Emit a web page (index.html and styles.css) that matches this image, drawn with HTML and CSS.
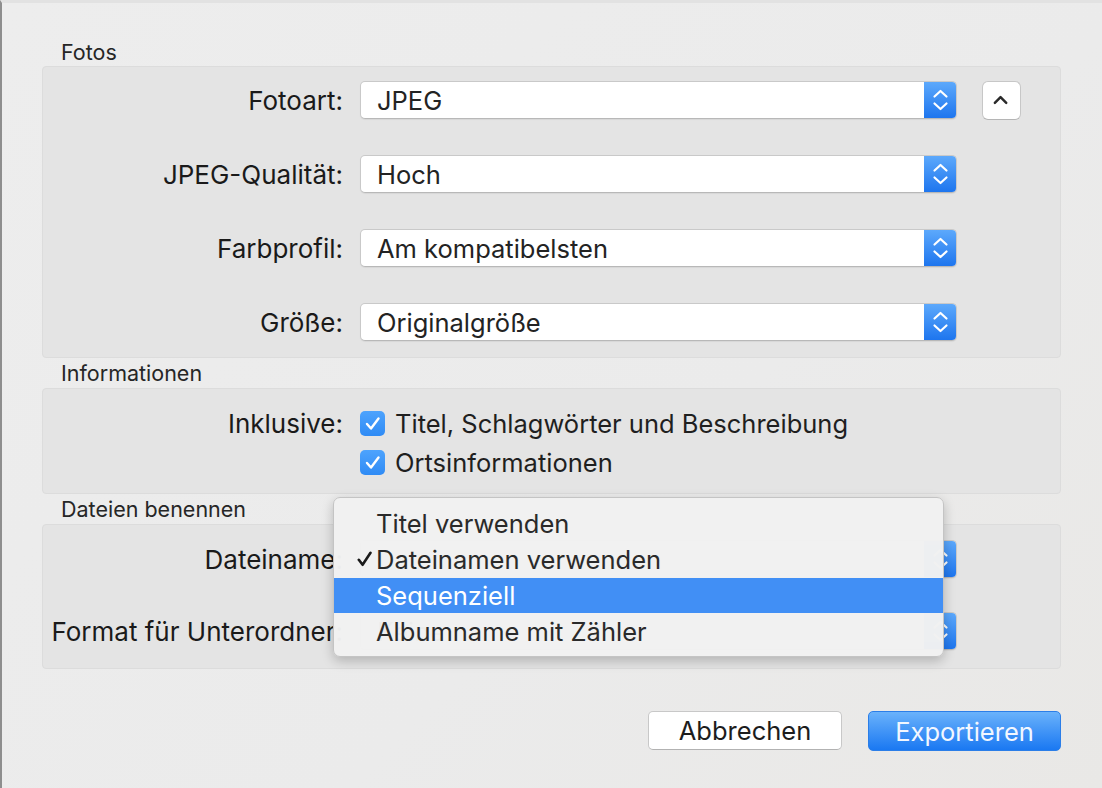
FILE: index.html
```html
<!DOCTYPE html>
<html lang="de">
<head>
<meta charset="utf-8">
<title>Exportieren</title>
<link rel="stylesheet" href="styles.css">
</head>
<body>
<div class="window">
  <div class="section-title first">Fotos</div>
  <div class="box box-fotos">
    <div class="row">
      <div class="label">Fotoart:</div>
      <div class="popup"><span class="value">JPEG</span><span class="stepper"><svg viewBox="0 0 33 38" width="33" height="38"><path d="M10.5 15.5 L16.5 10 L22.5 15.5" /><path d="M10.5 22.5 L16.5 28 L22.5 22.5" /></svg></span></div>
      <div class="disclose"><svg viewBox="0 0 39 39" width="37" height="37"><path d="M12.5 22 L18.5 16 L24.5 22" /></svg></div>
    </div>
    <div class="row">
      <div class="label">JPEG-Qualität:</div>
      <div class="popup"><span class="value">Hoch</span><span class="stepper"><svg viewBox="0 0 33 38" width="33" height="38"><path d="M10.5 15.5 L16.5 10 L22.5 15.5" /><path d="M10.5 22.5 L16.5 28 L22.5 22.5" /></svg></span></div>
    </div>
    <div class="row">
      <div class="label">Farbprofil:</div>
      <div class="popup"><span class="value">Am kompatibelsten</span><span class="stepper"><svg viewBox="0 0 33 38" width="33" height="38"><path d="M10.5 15.5 L16.5 10 L22.5 15.5" /><path d="M10.5 22.5 L16.5 28 L22.5 22.5" /></svg></span></div>
    </div>
    <div class="row">
      <div class="label">Größe:</div>
      <div class="popup"><span class="value">Originalgröße</span><span class="stepper"><svg viewBox="0 0 33 38" width="33" height="38"><path d="M10.5 15.5 L16.5 10 L22.5 15.5" /><path d="M10.5 22.5 L16.5 28 L22.5 22.5" /></svg></span></div>
    </div>
  </div>

  <div class="section-title">Informationen</div>
  <div class="box box-info">
    <div class="check-row">
      <div class="label">Inklusive:</div>
      <div class="check"><span class="checkbox"><svg viewBox="0 0 25 25" width="25" height="25"><path d="M7 13 L11 17.5 L18.5 7.5" /></svg></span><span>Titel, Schlagwörter und Beschreibung</span></div>
    </div>
    <div class="check-row">
      <div class="label"></div>
      <div class="check"><span class="checkbox"><svg viewBox="0 0 25 25" width="25" height="25"><path d="M7 13 L11 17.5 L18.5 7.5" /></svg></span><span>Ortsinformationen</span></div>
    </div>
  </div>

  <div class="section-title">Dateien benennen</div>
  <div class="box box-files">
    <div class="row">
      <div class="label">Dateiname:</div>
      <div class="popup"><span class="value">Dateinamen verwenden</span><span class="stepper"><svg viewBox="0 0 33 38" width="33" height="38"><path d="M10.5 15.5 L16.5 10 L22.5 15.5" /><path d="M10.5 22.5 L16.5 28 L22.5 22.5" /></svg></span></div>
    </div>
    <div class="row">
      <div class="label">Format für Unterordner:</div>
      <div class="popup"><span class="value">Keine</span><span class="stepper"><svg viewBox="0 0 33 38" width="33" height="38"><path d="M10.5 15.5 L16.5 10 L22.5 15.5" /><path d="M10.5 22.5 L16.5 28 L22.5 22.5" /></svg></span></div>
    </div>
  </div>

  <div class="buttons">
    <div class="btn btn-cancel">Abbrechen</div>
    <div class="btn btn-default">Exportieren</div>
  </div>

  <div class="menu">
    <div class="menu-item"><span class="mark"></span>Titel verwenden</div>
    <div class="menu-item"><span class="mark"><svg viewBox="0 0 16 16" width="16" height="16"><path d="M1.8 8.8 L5.6 13.8 L13.5 1.8" /></svg></span>Dateinamen verwenden</div>
    <div class="menu-item selected"><span class="mark"></span>Sequenziell</div>
    <div class="menu-item"><span class="mark"></span>Albumname mit Zähler</div>
  </div>
</div>
</body>
</html>
```

FILE: styles.css
```css
html, body {
  margin: 0;
  padding: 0;
}
body {
  width: 1102px;
  height: 788px;
  overflow: hidden;
  background: #ececec;
  font-family: Inter, "Noto Sans", sans-serif;
  color: #1f1f1f;
}
.window {
  position: relative;
  box-sizing: border-box;
  width: 1102px;
  height: 788px;
  padding: 36px 41px 0 42px;
  border-left: 2px solid #8e8e8e;
  border-top: 3px solid #e2e2e2;
  background: linear-gradient(135deg, #ededed 0%, #ebebeb 60%, #e9e8e6 100%);
}
.section-title {
  height: 30px;
  line-height: 30px;
  padding-left: 17px;
  font-size: 21.5px;
  color: #262626;
}
.section-title.first {
  height: 27px;
  line-height: 27px;
}
.box {
  box-sizing: border-box;
  width: 1019px;
  margin-left: -2px;
  background: #e4e4e4;
  border: 1px solid #dcdcdc;
  border-radius: 4px;
}
.box-fotos {
  padding: 14px 0 16px;
  display: flex;
  flex-direction: column;
  gap: 36px;
}
.box-info {
  padding: 17px 0 14px;
  display: flex;
  flex-direction: column;
  gap: 5px;
}
.box-files {
  padding: 15px 0 18px;
  display: flex;
  flex-direction: column;
  gap: 34px;
}
.row, .check-row {
  display: flex;
  align-items: center;
}
.row { height: 38px; }
.check-row { height: 34px; }
.label {
  box-sizing: border-box;
  width: 300px;
  flex: none;
  text-align: right;
  font-size: 26px;
  color: #1a1a1a;
  white-space: nowrap;
}
.popup {
  box-sizing: border-box;
  margin-left: 17px;
  width: 597px;
  height: 38px;
  display: flex;
  align-items: center;
  background: #ffffff;
  border: 1px solid #c9c9c9;
  border-bottom-color: #b8b8b8;
  border-radius: 5px;
  box-shadow: 0 1px 1px rgba(0,0,0,0.06);
  overflow: hidden;
}
.value {
  flex: 1;
  padding-left: 16px;
  font-size: 25.5px;
  color: #232323;
  white-space: nowrap;
}
.stepper {
  width: 33px;
  height: 38px;
  margin: -1px -1px -1px 0;
  flex: none;
  background: linear-gradient(#5eaafc, #1c74ee);
  border-radius: 0 5px 5px 0;
  display: flex;
  align-items: center;
  justify-content: center;
}
.stepper svg path {
  fill: none;
  stroke: #ffffff;
  stroke-width: 2.2;
  stroke-linecap: round;
  stroke-linejoin: round;
}
.disclose {
  box-sizing: border-box;
  margin-left: 25px;
  width: 39px;
  height: 39px;
  background: #ffffff;
  border: 1px solid #c7c7c7;
  border-bottom-color: #b5b5b5;
  border-radius: 6px;
  display: flex;
  align-items: center;
  justify-content: center;
}
.disclose svg path {
  fill: none;
  stroke: #2a2a2a;
  stroke-width: 2.6;
  stroke-linecap: round;
  stroke-linejoin: round;
}
.check {
  margin-left: 17px;
  display: flex;
  align-items: center;
  gap: 10px;
  font-size: 25.5px;
  color: #1f1f1f;
  white-space: nowrap;
}
.checkbox {
  width: 25px;
  height: 25px;
  border-radius: 5px;
  background: linear-gradient(#4da3fd, #2f8bf5);
  display: flex;
}
.checkbox svg path {
  fill: none;
  stroke: #ffffff;
  stroke-width: 2.4;
  stroke-linecap: round;
  stroke-linejoin: round;
}
.buttons {
  display: flex;
  justify-content: flex-end;
  gap: 26px;
  margin-top: 42px;
}
.btn {
  box-sizing: border-box;
  width: 194px;
  height: 39px;
  border-radius: 5px;
  display: flex;
  align-items: center;
  justify-content: center;
  font-size: 25.5px;
}
.btn-cancel {
  background: #ffffff;
  border: 1px solid #c8c8c8;
  border-bottom-color: #b2b2b2;
  color: #1d1d1d;
}
.btn-default {
  background: linear-gradient(#6ab2fb, #1a78f2);
  border: 1px solid #2b7ee8;
  color: #f2f7ff;
  width: 193px;
  height: 40px;
}
.menu {
  position: absolute;
  left: 331px;
  top: 494px;
  box-sizing: border-box;
  width: 611px;
  height: 160px;
  padding-top: 7px;
  background: rgba(241, 241, 241, 0.98);
  border: 1px solid #c4c4c4;
  border-radius: 7px;
  box-shadow: 0 4px 12px rgba(0,0,0,0.22);
  overflow: hidden;
}
.menu-item {
  height: 36px;
  display: flex;
  align-items: center;
  font-size: 25.5px;
  color: #2a2a2a;
  white-space: nowrap;
}
.menu-item .mark {
  box-sizing: border-box;
  width: 42px;
  flex: none;
  padding-left: 23px;
  display: flex;
  align-items: center;
}
.menu-item .mark svg path {
  fill: none;
  stroke: #1a1a1a;
  stroke-width: 2.6;
  stroke-linecap: round;
  stroke-linejoin: round;
}
.menu-item.selected {
  background: #418ff5;
  color: #ffffff;
  height: 35px;
  margin-top: 1px;
}
```
